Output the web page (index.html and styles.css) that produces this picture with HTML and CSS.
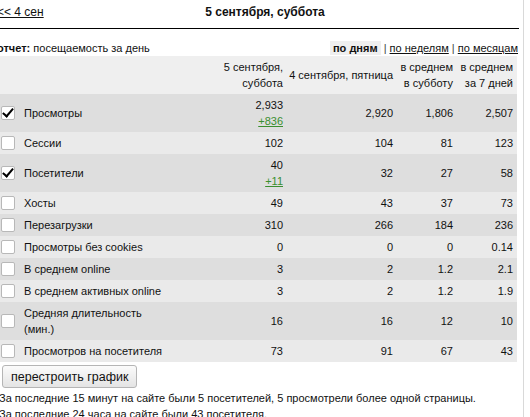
FILE: index.html
```html
<!DOCTYPE html>
<html lang="ru">
<head>
<meta charset="utf-8">
<link rel="stylesheet" href="styles.css">
</head>
<body>
<div class="page">
  <div class="topbar">
    <a class="prev" href="#">&lt;&lt; 4 сен</a>
    <div class="title">5 сентября, суббота</div>
    <div></div>
  </div>
  <div class="reportbar">
    <div><b>отчет:</b> посещаемость за день</div>
    <div class="periods"><b class="active">по дням</b> <span class="sep">|</span> <a href="#">по неделям</a> <span class="sep">|</span> <a href="#">по месяцам</a></div>
  </div>
  <table class="stats">
    <colgroup>
      <col class="c-label"><col class="c-1"><col class="c-2"><col class="c-3"><col class="c-4">
    </colgroup>
    <thead>
      <tr>
        <th></th>
        <th>5 сентября,<br>суббота</th>
        <th>4 сентября, пятница</th>
        <th>в среднем<br>в субботу</th>
        <th>в среднем<br>за 7 дней</th>
      </tr>
    </thead>
    <tbody>
      <tr class="dark"><td class="label"><div class="lbl"><span class="cb checked"></span><span>Просмотры</span></div></td><td>2,933<br><a class="diff" href="#">+836</a></td><td>2,920</td><td>1,806</td><td>2,507</td></tr>
      <tr class="light"><td class="label"><div class="lbl"><span class="cb"></span><span>Сессии</span></div></td><td>102</td><td>104</td><td>81</td><td>123</td></tr>
      <tr class="dark"><td class="label"><div class="lbl"><span class="cb checked"></span><span>Посетители</span></div></td><td>40<br><a class="diff" href="#">+11</a></td><td>32</td><td>27</td><td>58</td></tr>
      <tr class="light"><td class="label"><div class="lbl"><span class="cb"></span><span>Хосты</span></div></td><td>49</td><td>43</td><td>37</td><td>73</td></tr>
      <tr class="dark"><td class="label"><div class="lbl"><span class="cb"></span><span>Перезагрузки</span></div></td><td>310</td><td>266</td><td>184</td><td>236</td></tr>
      <tr class="light"><td class="label"><div class="lbl"><span class="cb"></span><span>Просмотры без cookies</span></div></td><td>0</td><td>0</td><td>0</td><td>0.14</td></tr>
      <tr class="dark"><td class="label"><div class="lbl"><span class="cb"></span><span>В среднем online</span></div></td><td>3</td><td>2</td><td>1.2</td><td>2.1</td></tr>
      <tr class="light"><td class="label"><div class="lbl"><span class="cb"></span><span>В среднем активных online</span></div></td><td>3</td><td>2</td><td>1.2</td><td>1.9</td></tr>
      <tr class="dark"><td class="label"><div class="lbl"><span class="cb"></span><span>Средняя длительность<br>(мин.)</span></div></td><td>16</td><td>16</td><td>12</td><td>10</td></tr>
      <tr class="light"><td class="label"><div class="lbl"><span class="cb"></span><span>Просмотров на посетителя</span></div></td><td>73</td><td>91</td><td>67</td><td>43</td></tr>
    </tbody>
  </table>
  <div class="actions"><button class="rebuild" type="button">перестроить график</button></div>
  <p class="note">За последние 15 минут на сайте были 5 посетителей, 5 просмотрели более одной страницы.</p>
  <p class="note">За последние 24 часа на сайте были 43 посетителя.</p>
</div>
</body>
</html>
```

FILE: styles.css
```css
html, body {
  margin: 0;
  padding: 0;
  background: #fff;
  overflow: hidden;
}
body {
  font-family: "Liberation Sans", Arial, sans-serif;
  font-size: 11px;
  color: #111;
}
.page {
  width: 526px;
  margin-left: -3px;
  min-height: 417px;
  border-right: 1px solid #d9d9d9;
}
a { color: #111; }
.topbar {
  display: grid;
  grid-template-columns: 1fr auto 1fr;
  align-items: center;
  height: 28px;
  padding-left: 14px;
  margin-right: 4px;
  border-bottom: 1px solid #000;
  font-size: 12px;
}
.topbar .prev {
  margin-left: -14px;
  margin-top: -4px;
}
.title {
  font-weight: bold;
  margin-top: -4px;
}
.reportbar {
  display: flex;
  justify-content: space-between;
  align-items: flex-end;
  height: 27px;
  box-sizing: border-box;
  padding: 0 5px 2px 0;
}
.periods .active {
  background: #efefef;
  padding: 1px 3px;
}
.periods .sep { color: #444; }
.stats {
  width: 520px;
  border-collapse: collapse;
  table-layout: fixed;
}
.c-label { width: 218px; }
.c-1 { width: 72px; }
.c-2 { width: 110px; }
.c-3 { width: 60px; }
.c-4 { width: 60px; }
.stats th, .stats td {
  padding: 3px 4px 3px 0;
  line-height: 16px;
  height: 16px;
  text-align: right;
  font-weight: normal;
  vertical-align: middle;
}
.stats thead tr { background: #efefef; }
.stats tr.dark { background: #dedede; }
.stats tr.light { background: #eaeaea; }
.stats td.label {
  text-align: left;
  padding-left: 4px;
}
.lbl {
  display: flex;
  align-items: center;
  gap: 9px;
}
.cb {
  flex: none;
  width: 12px;
  height: 12px;
  background: #fff;
  border: 1px solid #b8b8b8;
  border-radius: 2px;
  position: relative;
}
.cb.checked::after {
  content: "";
  position: absolute;
  left: 3px;
  top: -1px;
  width: 4px;
  height: 9px;
  border: solid #000;
  border-width: 0 2.5px 2.5px 0;
  transform: rotate(40deg);
}
.diff {
  color: #3a8f2f;
}
.actions {
  padding: 3px 0 0 5px;
}
.rebuild {
  font-family: "Liberation Sans", Arial, sans-serif;
  font-size: 12.5px;
  color: #111;
  height: 23px;
  padding: 0 8px;
  border: 1px solid #b5b5b5;
  border-radius: 3px;
  background: linear-gradient(#fbfbfb, #e4e4e4);
}
.note {
  margin: 0;
  line-height: 16px;
  padding-left: 2px;
}
.actions + .note { margin-top: 2px; }
```
